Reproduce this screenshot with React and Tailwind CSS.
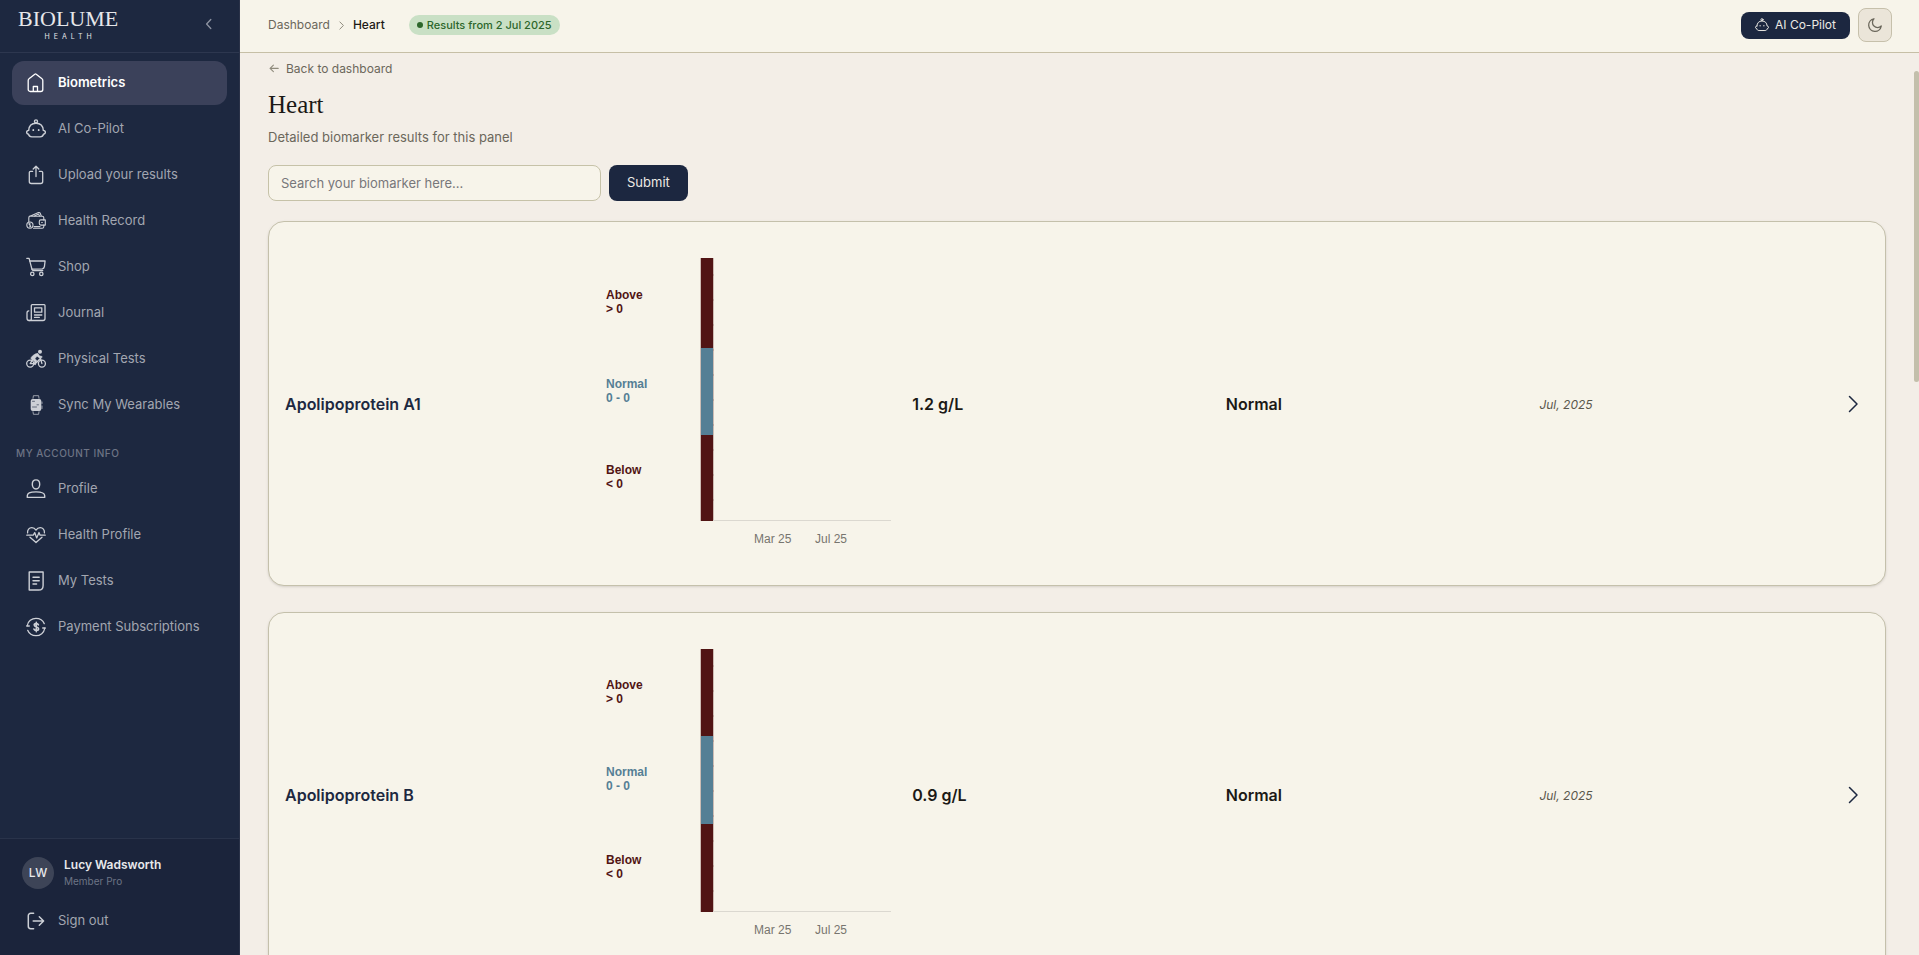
import React, { useState } from 'react';

const Icon = ({ children, size = 20, width = 1.4 }) => (
  <svg
    width={size}
    height={size}
    viewBox="0 0 20 20"
    fill="none"
    stroke="currentColor"
    strokeWidth={width}
    strokeLinecap="round"
    strokeLinejoin="round"
    className="shrink-0"
    aria-hidden="true"
  >
    {children}
  </svg>
);

const HomeIcon = () => (
  <Icon width={1.3}>
    <path d="M2.2 7.4a2 2 0 0 1 .8-1.6L8.8 1.2a1.1 1.1 0 0 1 1.4 0L16 5.8a2 2 0 0 1 .8 1.6v9.1a2 2 0 0 1-2 2H4.2a2 2 0 0 1-2-2z" />
    <path d="M7.3 18.3v-4.8h4.2v4.8" />
  </Icon>
);

const RobotIcon = ({ size }) => (
  <Icon size={size}>
    <circle cx="10" cy="2.4" r="1.5" />
    <path d="M2.7 11.4C3 7 5.6 4.3 10 4.3s7 2.7 7.300 7.100c1.400.2 2.100.9 2.100 1.900s-.7 1.700-1.900 1.900c-.4 1.900-1.500 2.700-3.300 2.700H5.800c-1.800 0-2.900-.8-3.300-2.700-1.200-.2-1.900-.9-1.900-1.900s.7-1.700 2.100-1.900z" />
    <path d="M7.300 11v.2M12.700 11v.2" strokeWidth="1.8" />
  </Icon>
);

const UploadIcon = () => (
  <Icon width={1.3}>
    <path d="M6.600 6.400H4.500a1.200 1.200 0 0 0-1.200 1.200v8.900a2 2 0 0 0 2 2h9.400a2 2 0 0 0 2-2V7.600a1.200 1.200 0 0 0-1.200-1.200h-2.100" />
    <path d="M10 11.500V1.300M7.200 4 10 1.200 12.800 4" />
  </Icon>
);

const WalletIcon = () => (
  <Icon width={1.1}>
    <path d="M2.800 10.400V6.800c0-1 .6-1.700 1.700-1.900l8-3.300c.8-.3 1.400 0 1.700.6l1.100 2.700M5 5.200h11.200c1 0 1.600.6 1.600 1.600v2.100M7.500 17.300h8.700c1 0 1.600-.6 1.600-1.600v-1.600" />
    <path d="M8.500 4.900l4-1.800 1 1.800" />
    <path d="M14.800 8.900h4.500v5.200h-4.500a1.500 1.500 0 0 1-1.500-1.500v-2.200a1.500 1.500 0 0 1 1.500-1.500zM15.700 11.500h.6M8 15.600h6" />
    <circle cx="3.900" cy="14.100" r="3.100" />
    <path d="M2.900 12.800 4.800 15.300M3.900 12v4.200" />
  </Icon>
);

const CartIcon = () => (
  <Icon width={1.3}>
    <path d="M.8 1.300h2.300L6 12.300c.2.800.7 1.200 1.500 1.200h9.200" />
    <path d="M3.800 4h15.300l-.7 5.700c-.2 1.300-.9 2-2.200 2.100L6 12.200" />
    <circle cx="6.300" cy="16.900" r="1.700" />
    <circle cx="15.300" cy="16.900" r="1.700" />
  </Icon>
);

const JournalIcon = () => (
  <Icon width={1.3}>
    <path d="M5.300 16V2.500c0-.6.300-.9.900-.9h11.900c.6 0 .9.300.9.900v13c0 1.300-.7 2-2 2H3c1.500 0 2.300-.6 2.300-1.500z" />
    <path d="M3.200 17.500c-1.500 0-2.200-.7-2.200-2.200V10c0-1.600.7-2.200 1.800-2.200" />
    <path d="M8.500 4.800h7.300v4.400H8.500zM8.500 12h7.300M8.500 14.400h4.800" />
  </Icon>
);

const BikeIcon = () => (
  <Icon width={1.3}>
    <circle cx="4.200" cy="14.600" r="3.500" />
    <circle cx="15.900" cy="14.600" r="3.500" />
    <circle cx="14" cy="2.700" r="2" fill="currentColor" stroke="none" />
    <path
      d="M11.300 4.600c1.100.3 1.700 1 2.100 2.200l2.700.7-.3 1.300-3.500-.5-1.200-1.300-2.200 2.700 1.900 1.700-1.200 4.300-1.600-.4.600-3.100-3-1.900c-.8-.6-.8-1.400-.2-2.100 1.500-1.800 3.700-3.700 5.900-3.600z"
      fill="currentColor"
      strokeWidth="0.6"
    />
    <path d="m4.200 14.600 2.500-4.300M9.300 14.600H4.200M10.500 13.500l4-4.200 1.400 5.300M13.800 8.500l.7.800" />
  </Icon>
);

const WatchIcon = () => (
  <Icon width={1}>
    <path d="M7 3.300 7.400.7h5.200l.4 2.600M7 16.700l.4 2.600h5.200l.4-2.600" strokeOpacity="0.7" />
    <rect x="4.700" y="3.900" width="10.600" height="12.200" rx="2" fill="currentColor" stroke="none" />
    <path d="M16 7v1.500M16 11v2.500" strokeOpacity="0.7" />
    <path d="M6.500 6.300h2M11 9.800h1.500M6.500 12h4" stroke="#1d2840" strokeOpacity="0.6" />
  </Icon>
);

const ProfileIcon = () => (
  <Icon>
    <path d="M10 .9c2.200 0 3.700 1.700 3.700 4.300S12.200 10 10 10 6.300 7.800 6.300 5.200 7.800.9 10 .9z" />
    <path d="M1.300 18.400v-1.600c0-2.700 2.200-3.900 8.700-3.900s8.700 1.200 8.700 3.900v1.600z" />
  </Icon>
);

const HeartIcon = () => (
  <Icon width={1.3}>
    <path d="M.8 10.200h6.400l1.500-2.600 2 5.300 2.300-5.400 1.100 2.700h5.100" />
    <path d="M1.600 7.900C1.200 4.600 3.200 2.700 5.800 2.700c1.800 0 3.200.9 4.200 2.400 1-1.500 2.400-2.400 4.200-2.400 2.600 0 4.600 1.900 4.200 5.200M4 12.300l6 5.300 6-5.300" />
  </Icon>
);

const TestsIcon = () => (
  <Icon>
    <path d="M3.200 1h13.900v13.400c0 2.800-1.600 4.600-4.400 4.600H3.200z" />
    <path d="M7 6.300h6.200M7 9.700h6.200M7 13h3.600" />
  </Icon>
);

const PaymentIcon = () => (
  <Icon width={1.3}>
    <path d="M1.300 8.500C2 4.300 5.600 1.300 10 1.300c3.900 0 7 2.200 8.300 5.400M18.700 11.500c-.7 4.200-4.300 7.200-8.700 7.200-3.900 0-7-2.200-8.300-5.400" />
    <path d="M.7 9h2.600M16.700 11h2.600" />
    <path
      d="M12.400 7.800c-.3-.8-1.100-1.200-2.100-1.200-1.300 0-2.100.5-2.100 1.500 0 2.500 4.400 1.200 4.400 3.700 0 1.100-.9 1.700-2.200 1.700s-2.200-.5-2.500-1.400M10.300 5.300v9.400"
      strokeWidth="1.6"
    />
  </Icon>
);

const SignOutIcon = () => (
  <Icon width={1.5}>
    <path d="M7.600 2.300H4.700a2.400 2.400 0 0 0-2.400 2.400v10.600a2.400 2.400 0 0 0 2.400 2.400h2.900" />
    <path d="M7.200 10h10.300M13.300 5.700l4.300 4.300-4.300 4.300" />
  </Icon>
);

const mainLinks = [
  { label: 'Biometrics', icon: HomeIcon },
  { label: 'AI Co-Pilot', icon: RobotIcon },
  { label: 'Upload your results', icon: UploadIcon },
  { label: 'Health Record', icon: WalletIcon },
  { label: 'Shop', icon: CartIcon },
  { label: 'Journal', icon: JournalIcon },
  { label: 'Physical Tests', icon: BikeIcon },
  { label: 'Sync My Wearables', icon: WatchIcon },
];

const accountLinks = [
  { label: 'Profile', icon: ProfileIcon },
  { label: 'Health Profile', icon: HeartIcon },
  { label: 'My Tests', icon: TestsIcon },
  { label: 'Payment Subscriptions', icon: PaymentIcon },
];

const biomarkers = [
  { name: 'Apolipoprotein A1', value: '1.2 g/L', status: 'Normal', date: 'Jul, 2025', stops: [20, 110, 197, 283] },
  { name: 'Apolipoprotein B', value: '0.9 g/L', status: 'Normal', date: 'Jul, 2025', stops: [20, 107, 195, 283] },
];

const zones = [
  { label: 'Above', range: '> 0', color: '#511414' },
  { label: 'Normal', range: '0 - 0', color: '#557f95' },
  { label: 'Below', range: '< 0', color: '#511414' },
];

function NavItem({ label, icon: NavIcon, active }) {
  return (
    <a
      href="#"
      aria-current={active ? 'page' : undefined}
      className={`flex h-11 items-center gap-3 rounded-xl px-3.5 text-[13px] ${
        active ? 'bg-[#3b415a] font-semibold text-white' : 'text-[#a2a6b0]'
      }`}
    >
      <span className={active ? 'text-white' : 'text-[#cdd0d6]'}>
        <NavIcon />
      </span>
      {label}
    </a>
  );
}

function Sidebar() {
  return (
    <aside className="flex w-60 shrink-0 flex-col border-r border-[#2a3248] bg-[#1d2840]">
      <div className="flex h-[53px] items-center justify-between border-b border-[#2d374f] pr-6 pb-1 pl-[18px]">
        <div className="flex flex-col items-center gap-1 text-[#e6e7ea]">
          <span className="font-['Liberation_Serif',serif] text-[22px] leading-5">BIOLUME</span>
          <span className="pl-1 text-[7px] leading-[7px] tracking-[4px]">HEALTH</span>
        </div>
        <button type="button" aria-label="Collapse sidebar" className="text-[#8d93a1]">
          <Icon size={12} width={2.2}>
            <path d="M13 2.500 6 10l7 7.500" />
          </Icon>
        </button>
      </div>

      <nav className="flex flex-1 flex-col gap-0.5 px-3 pt-2">
        {mainLinks.map((link, i) => (
          <NavItem key={link.label} {...link} active={i === 0} />
        ))}
        <p className="px-1 pt-[18px] pb-1.5 text-[10px] leading-3 font-medium tracking-wider text-[#6d7485]">
          MY ACCOUNT INFO
        </p>
        {accountLinks.map((link) => (
          <NavItem key={link.label} {...link} />
        ))}
      </nav>

      <div className="border-t border-[#29334a] bg-[#1b243b] px-3 pt-[18px] pb-3">
        <div className="flex items-center gap-2.5 px-2.5 pb-2.5">
          <div className="flex size-8 items-center justify-center rounded-full bg-[#3d4457] text-xs font-medium text-[#e8e9ec]">
            LW
          </div>
          <div>
            <p className="text-xs leading-4 font-semibold text-[#e8e9ec]">Lucy Wadsworth</p>
            <p className="text-[10px] leading-4 text-[#6d7485]">Member Pro</p>
          </div>
        </div>
        <button type="button" className="flex h-11 w-full items-center gap-3 px-3.5 text-[13px] text-[#a2a6b0]">
          <span className="text-[#cdd0d6]">
            <SignOutIcon />
          </span>
          Sign out
        </button>
      </div>
    </aside>
  );
}

function Header() {
  return (
    <header className="flex h-[53px] shrink-0 items-center justify-between border-b border-[#c6bfa6] bg-[#f7f4ea] pr-[27px] pb-0.5 pl-7">
      <div className="flex items-center text-xs">
        <a href="#" className="text-[#6b675b]">Dashboard</a>
        <span className="px-1.5 text-[#8f8b7d]">
          <Icon size={11} width={1.8}>
            <path d="M7 3.500 13.500 10 7 16.500" />
          </Icon>
        </span>
        <span className="font-medium text-[#1b1916]">Heart</span>
        <span className="ml-6 flex h-5 items-center gap-1 rounded-full bg-[#c9e0c5] px-2 text-[11px] font-medium text-[#2c662b]">
          <span className="size-1.5 rounded-full bg-[#2c662b]" />
          Results from 2 Jul 2025
        </span>
      </div>
      <div className="flex items-center gap-2">
        <button
          type="button"
          className="flex h-[27px] items-center gap-1.5 rounded-lg bg-[#1c2740] px-3.5 text-xs text-[#eceae4]"
        >
          <RobotIcon size={14} />
          AI Co-Pilot
        </button>
        <button
          type="button"
          aria-label="Toggle dark mode"
          className="flex size-[34px] items-center justify-center rounded-lg border border-[#c6c0ab] bg-[#ebe5d9] text-[#6b675b]"
        >
          <Icon size={16} width={1.6}>
            <path d="M17.800 11.300A7.900 7.900 0 1 1 8.700 2.200a6.200 6.200 0 0 0 9.100 9.100z" />
          </Icon>
        </button>
      </div>
    </header>
  );
}

function RangeChart({ stops }) {
  const ticks = Array.from({ length: 10 }, (_, i) => 37 + i * 25);
  return (
    <svg className="h-[331px] w-full font-['Liberation_Sans',sans-serif] text-xs" role="img" aria-label="Reference range chart">
      {zones.map((zone, i) => {
        const top = stops[i];
        const height = stops[i + 1] - top;
        const baseline = Math.round(top + height / 2) - 4;
        return (
          <g key={zone.label} fill={zone.color}>
            <rect x="102" y={top} width="12" height={height} />
            <text x="7" y={baseline} fontWeight="bold">{zone.label}</text>
            <text x="7" y={baseline + 14} fontWeight="bold">{zone.range}</text>
          </g>
        );
      })}
      <path d="M101.500 20v263M114.500 20v263" stroke="#511414" strokeOpacity="0.25" />
      {ticks.map((y) => (
        <path key={y} d={`M114 ${y}h1`} stroke="#511414" strokeOpacity="0.3" />
      ))}
      <path d="M114 282.500h178" stroke="#dbd8d0" />
      <text x="155" y="305" fill="#77756f">Mar 25</text>
      <text x="216" y="305" fill="#77756f">Jul 25</text>
    </svg>
  );
}

function BiomarkerCard({ marker }) {
  return (
    <article className="flex items-center gap-1 rounded-2xl border border-[#c4c0ab] bg-[#f7f4ea] py-4 pr-5 pl-4 shadow-sm">
      <div className="grid min-w-0 flex-1 grid-cols-5 items-center gap-4">
        <h2 className="text-base font-semibold text-[#1d2840]">{marker.name}</h2>
        <RangeChart stops={marker.stops} />
        <p className="text-base font-semibold text-[#1b1916]">{marker.value}</p>
        <p className="text-base font-semibold text-[#1b1916]">{marker.status}</p>
        <p className="pt-0.5 text-xs text-[#5b574c] italic">{marker.date}</p>
      </div>
      <button type="button" aria-label={`Open ${marker.name}`} className="text-[#1d2840]">
        <svg width="24" height="24" viewBox="0 0 24 24" fill="none" stroke="currentColor" strokeWidth="1.5">
          <path d="m8.500 4.500 7.500 7.500-7.500 7.500" strokeLinecap="round" strokeLinejoin="round" />
        </svg>
      </button>
    </article>
  );
}

function App() {
  const [search, setSearch] = useState('');
  const [query, setQuery] = useState('');

  const handleSubmit = (e) => {
    e.preventDefault();
    setQuery(search);
  };

  const filtered = biomarkers.filter((m) => m.name.toLowerCase().includes(query.toLowerCase()));

  return (
    <div className="flex h-screen overflow-hidden bg-[#f3eee7] font-['Inter',sans-serif]">
      <Sidebar />
      <div className="flex min-w-0 flex-1 flex-col">
        <Header />
        <div className="flex min-h-0 flex-1">
          <main className="min-w-0 flex-1 overflow-y-auto px-7 pt-2 [scrollbar-width:none]">
            <a href="#" className="flex items-center gap-1.5 text-xs leading-4 text-[#6b675b]">
              <span className="text-[#8f8b7d]">
                <Icon size={12} width={1.8}>
                  <path d="M17 9H3.500M9 3.500 3.500 9l5.500 5.500" />
                </Icon>
              </span>
              Back to dashboard
            </a>
            <h1 className="pt-3 font-['Liberation_Serif',serif] text-[25px] leading-8 text-[#1b1916]">Heart</h1>
            <p className="pt-1.5 text-[13px] leading-5 text-[#6b675b]">Detailed biomarker results for this panel</p>

            <form onSubmit={handleSubmit} className="flex gap-2 pt-[18px] pb-5">
              <input
                type="text"
                aria-label="Search your biomarker"
                placeholder="Search your biomarker here..."
                value={search}
                onChange={(e) => setSearch(e.target.value)}
                className="h-9 w-[333px] rounded-lg border border-[#c6c2a8] bg-[#f7f4ea] px-3 text-[13px] text-[#1b1916] placeholder:text-[#77777a]"
              />
              <button type="submit" className="h-9 rounded-lg bg-[#1c2740] px-[18px] text-[13px] text-[#eceae4]">
                Submit
              </button>
            </form>

            {/* Biomarker list */}
            <div className="flex flex-col gap-[26px] pb-7">
              {filtered.map((marker) => (
                <BiomarkerCard key={marker.name} marker={marker} />
              ))}
            </div>
          </main>

          {/* Scroll position */}
          <div className="flex w-[5px] flex-col" aria-hidden="true">
            <div className="basis-[2%]" />
            <div className="basis-[34.5%] rounded-t-sm rounded-b-sm bg-[#c3bfab]" />
          </div>
        </div>
      </div>
    </div>
  );
}

export default App;
